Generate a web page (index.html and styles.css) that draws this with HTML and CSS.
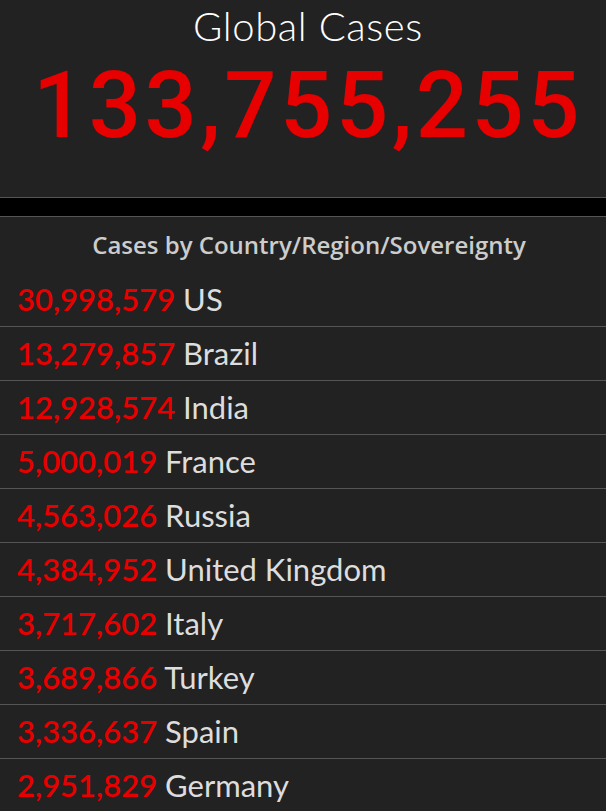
FILE: index.html
```html
<!DOCTYPE html>
<html>
<head>
<meta charset="utf-8">
<link rel="stylesheet" href="styles.css">
</head>
<body>
<div class="top">
  <div class="title">Global Cases</div>
  <div class="total">133,755,255</div>
</div>
<div class="band"></div>
<div class="panel">
  <div class="head">Cases by Country/Region/Sovereignty</div>
  <ul class="list">
    <li class="row"><span class="num">30,998,579</span> <span class="name">US</span></li>
    <li class="row"><span class="num">13,279,857</span> <span class="name">Brazil</span></li>
    <li class="row"><span class="num">12,928,574</span> <span class="name">India</span></li>
    <li class="row"><span class="num">5,000,019</span> <span class="name">France</span></li>
    <li class="row"><span class="num">4,563,026</span> <span class="name">Russia</span></li>
    <li class="row"><span class="num">4,384,952</span> <span class="name">United Kingdom</span></li>
    <li class="row"><span class="num">3,717,602</span> <span class="name">Italy</span></li>
    <li class="row"><span class="num">3,689,866</span> <span class="name">Turkey</span></li>
    <li class="row"><span class="num">3,336,637</span> <span class="name">Spain</span></li>
    <li class="row"><span class="num">2,951,829</span> <span class="name">Germany</span></li>
  </ul>
</div>
</body>
</html>
```
FILE: styles.css
```css
html, body {
  margin: 0;
  padding: 0;
  background: #222222;
  height: 100%;
  overflow: hidden;
}
body {
  font-family: "Lato", "Open Sans", sans-serif;
}
.top {
  height: 197px;
  border-bottom: 1px solid #555555;
  display: flex;
  flex-direction: column;
  align-items: center;
}
.title {
  color: #ffffff;
  font-size: 40px;
  line-height: 52px;
  font-weight: 300;
  letter-spacing: 0.6px;
  padding-left: 10px;
}
.total {
  color: #e60000;
  font-family: "Roboto", "Liberation Sans", sans-serif;
  font-weight: 500;
  font-size: 92px;
  line-height: 100px;
  letter-spacing: 3.5px;
  margin-top: 4px;
  padding-left: 10px;
}
.band {
  height: 18px;
  background: #000000;
  border-bottom: 1px solid #555555;
}
.panel {
  background: #222222;
}
.head {
  color: #cccccc;
  font-family: "Open Sans", "Lato", sans-serif;
  font-weight: 600;
  font-size: 24px;
  text-align: center;
  height: 56px;
  line-height: 56px;
  padding-left: 12px;
}
.list {
  list-style: none;
  margin: 0;
  padding: 0;
}
.row {
  height: 53px;
  line-height: 53px;
  border-bottom: 1px solid #555555;
  padding-left: 17px;
  font-size: 31px;
  white-space: nowrap;
}
.num {
  color: #e60000;
  font-weight: 600;
}
.name {
  color: #dddddd;
  font-weight: 400;
}
```
